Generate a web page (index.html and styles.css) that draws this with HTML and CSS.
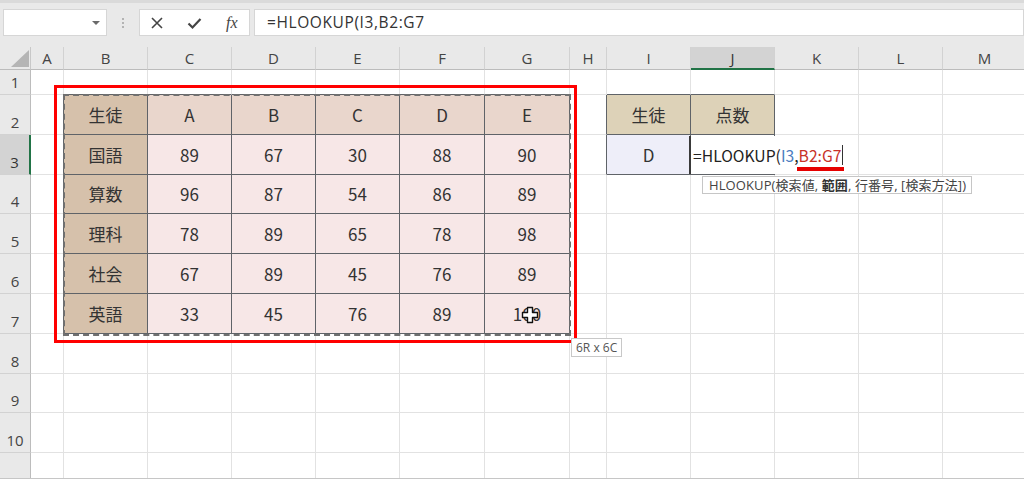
FILE: index.html
```html
<!DOCTYPE html>
<html lang="ja">
<head>
<meta charset="utf-8">
<title>HLOOKUP</title>
<link rel="stylesheet" href="styles.css">
</head>
<body>
<div class="toolbar">
  <div class="namebox"><span class="dd"></span></div>
  <div class="grip"><i></i><i></i><i></i></div>
  <div class="fxbox">
    <svg class="ic" width="14" height="14" viewBox="0 0 14 14"><path d="M2 2L12 12M12 2L2 12" stroke="#444" stroke-width="1.6" fill="none"/></svg>
    <svg class="ic ic2" width="15" height="14" viewBox="0 0 15 14"><path d="M1.5 7.5L5.5 11.5L13.5 3" stroke="#444" stroke-width="2.2" fill="none"/></svg>
    <span class="fx">fx</span>
  </div>
  <div class="formula">=HLOOKUP(I3,B2:G7</div>
</div>

<div class="sheet">
  <div class="grid">
    <div class="corner"><svg width="31" height="23" viewBox="0 0 31 23"><polygon points="29,3 11,20 29,20" fill="#b5b5b5"/></svg></div>
    <div class="ch">A</div><div class="ch">B</div><div class="ch">C</div><div class="ch">D</div><div class="ch">E</div><div class="ch">F</div><div class="ch">G</div><div class="ch">H</div><div class="ch">I</div><div class="ch sel">J</div><div class="ch">K</div><div class="ch">L</div><div class="ch">M</div>

    <div class="rh">1</div>
    <div class="c"></div><div class="c bb"></div><div class="c bb"></div><div class="c bb"></div><div class="c bb"></div><div class="c bb"></div><div class="c bb"></div><div class="c"></div><div class="c bb"></div><div class="c bb"></div><div class="c"></div><div class="c"></div><div class="c"></div>

    <div class="rh">2</div>
    <div class="c br"></div><div class="c t tan">生徒</div><div class="c t hdr">A</div><div class="c t hdr">B</div><div class="c t hdr">C</div><div class="c t hdr">D</div><div class="c t hdr">E</div><div class="c br"></div><div class="c t khaki">生徒</div><div class="c t khaki">点数</div><div class="c"></div><div class="c"></div><div class="c"></div>

    <div class="rh sel">3</div>
    <div class="c br"></div><div class="c t tan">国語</div><div class="c t pink">89</div><div class="c t pink">67</div><div class="c t pink">30</div><div class="c t pink">88</div><div class="c t pink">90</div><div class="c br"></div><div class="c t lav">D</div><div class="c t"></div><div class="c"></div><div class="c"></div><div class="c"></div>

    <div class="rh">4</div>
    <div class="c br"></div><div class="c t tan">算数</div><div class="c t pink">96</div><div class="c t pink">87</div><div class="c t pink">54</div><div class="c t pink">86</div><div class="c t pink">89</div><div class="c"></div><div class="c"></div><div class="c"></div><div class="c"></div><div class="c"></div><div class="c"></div>

    <div class="rh">5</div>
    <div class="c br"></div><div class="c t tan">理科</div><div class="c t pink">78</div><div class="c t pink">89</div><div class="c t pink">65</div><div class="c t pink">78</div><div class="c t pink">98</div><div class="c"></div><div class="c"></div><div class="c"></div><div class="c"></div><div class="c"></div><div class="c"></div>

    <div class="rh">6</div>
    <div class="c br"></div><div class="c t tan">社会</div><div class="c t pink">67</div><div class="c t pink">89</div><div class="c t pink">45</div><div class="c t pink">76</div><div class="c t pink">89</div><div class="c"></div><div class="c"></div><div class="c"></div><div class="c"></div><div class="c"></div><div class="c"></div>

    <div class="rh">7</div>
    <div class="c br"></div><div class="c t tan">英語</div><div class="c t pink">33</div><div class="c t pink">45</div><div class="c t pink">76</div><div class="c t pink">89</div><div class="c t pink">100</div><div class="c"></div><div class="c"></div><div class="c"></div><div class="c"></div><div class="c"></div><div class="c"></div>

    <div class="rh">8</div>
    <div class="c"></div><div class="c"></div><div class="c"></div><div class="c"></div><div class="c"></div><div class="c"></div><div class="c"></div><div class="c"></div><div class="c"></div><div class="c"></div><div class="c"></div><div class="c"></div><div class="c"></div>

    <div class="rh">9</div>
    <div class="c"></div><div class="c"></div><div class="c"></div><div class="c"></div><div class="c"></div><div class="c"></div><div class="c"></div><div class="c"></div><div class="c"></div><div class="c"></div><div class="c"></div><div class="c"></div><div class="c"></div>

    <div class="rh">10</div>
    <div class="c"></div><div class="c"></div><div class="c"></div><div class="c"></div><div class="c"></div><div class="c"></div><div class="c"></div><div class="c"></div><div class="c"></div><div class="c"></div><div class="c"></div><div class="c"></div><div class="c"></div>

    <div class="rh"></div>
    <div class="c"></div><div class="c"></div><div class="c"></div><div class="c"></div><div class="c"></div><div class="c"></div><div class="c"></div><div class="c"></div><div class="c"></div><div class="c"></div><div class="c"></div><div class="c"></div><div class="c"></div>
  </div>
</div>

<div class="ants"></div>
<div class="redbox"></div>
<svg class="cross" width="18" height="18" viewBox="0 0 18 18"><path d="M6.5 1.5h5v5h5v5h-5v5h-5v-5h-5v-5h5z" fill="#fff" stroke="#111" stroke-width="1.4" stroke-linejoin="round"/></svg>
<div class="sizetip">6R x 6C</div>

<div class="editor"><span>=HLOOKUP(</span><span class="ref1">I3</span><span>,</span><span class="ref2">B2:G7</span><span class="caret"></span></div>
<div class="argtip">HLOOKUP(検索値, <b>範囲</b>, 行番号, [検索方法])</div>
</body>
</html>
```

FILE: styles.css
```css
* { box-sizing: border-box; }
html, body { margin: 0; padding: 0; }
body {
  width: 1024px;
  height: 479px;
  overflow: hidden;
  background: #fff;
  position: relative;
  font-family: "Open Sans", "Noto Sans CJK JP", sans-serif;
  color: #333;
}

/* toolbar */
.toolbar {
  height: 47px;
  background: #e9e9e9;
  border-top: 3px solid #dadada;
  padding-top: 6px;
  display: flex;
  align-items: flex-start;
}
.namebox {
  margin-left: 3px;
  width: 104px;
  height: 27px;
  background: #fff;
  border: 1px solid #d6d6d6;
  display: flex;
  align-items: center;
  justify-content: flex-end;
  padding-right: 6px;
}
.dd {
  width: 0; height: 0;
  border-left: 4px solid transparent;
  border-right: 4px solid transparent;
  border-top: 4px solid #6a6a6a;
}
.grip {
  width: 32px;
  height: 27px;
  display: flex;
  flex-direction: column;
  align-items: center;
  justify-content: center;
  gap: 2px;
}
.grip i { width: 2px; height: 2px; background: #b3b3b3; display: block; }
.fxbox {
  width: 111px;
  height: 27px;
  background: #fff;
  border: 1px solid #d6d6d6;
  display: flex;
  align-items: center;
  padding-left: 10px;
}
.ic2 { margin-left: 23px; }
.fx {
  margin-left: 24px;
  font-family: "Liberation Serif", serif;
  font-style: italic;
  font-size: 16px;
  color: #444;
}
.formula {
  margin-left: 4px;
  flex: 1;
  height: 27px;
  background: #fff;
  border: 1px solid #d6d6d6;
  padding-left: 12px;
  font-size: 15.5px;
  letter-spacing: 0.6px;
  line-height: 25px;
  color: #333;
}

/* sheet */
.sheet {
  height: 432px;
  overflow: hidden;
  border-bottom: 1px solid #c6c6c6;
}
.grid {
  display: grid;
  grid-template-columns: 31px 33px 84px 84px 84px 84px 85px 85px 37px 84px 84px 84px 84px 84px;
  grid-template-rows: 23px 25px repeat(10, 39.8px);
}
.corner {
  background: #e9e9e9;
  border-right: 1px solid #c8c8c8;
  border-bottom: 1px solid #bcbcbc;
}
.corner svg { display: block; }
.ch {
  background: #e9e9e9;
  border-right: 1px solid #d2d2d2;
  border-bottom: 1px solid #bcbcbc;
  display: flex;
  align-items: center;
  justify-content: center;
  font-size: 15px;
  color: #444;
}
.ch.sel {
  background: #d3d3d3;
  border-bottom: 2px solid #217346;
  color: #333;
}
.rh {
  background: #e9e9e9;
  border-right: 1px solid #bcbcbc;
  border-bottom: 1px solid #d2d2d2;
  display: flex;
  align-items: flex-end;
  justify-content: center;
  padding-bottom: 2px;
  font-size: 15px;
  color: #444;
}
.rh.sel {
  background: #d3d3d3;
  border-right: 2px solid #217346;
  color: #333;
}
.c {
  border-right: 1px solid #e2e2e2;
  border-bottom: 1px solid #e2e2e2;
  display: flex;
  align-items: center;
  justify-content: center;
  font-family: "Noto Sans CJK JP", sans-serif;
  font-size: 17px;
  color: #333;
}
.c.bb { border-bottom-color: #5f6368; }
.c.br { border-right-color: #5f6368; }
.c.t { border-right-color: #5f6368; border-bottom-color: #5f6368; }
.tan { background: #d6c1ab; }
.hdr { background: #e9d6cc; }
.pink { background: #f7e7e7; }
.khaki { background: #ddd2b8; }
.lav { background: #eeeef9; }

/* overlays */
.ants {
  position: absolute;
  left: 63px;
  top: 94px;
  width: 508px;
  height: 242px;
  border: 2px dashed #707070;
}
.redbox {
  position: absolute;
  left: 54px;
  top: 85px;
  width: 523px;
  height: 258px;
  border: 3px solid #ff0000;
}
.cross {
  position: absolute;
  left: 521px;
  top: 306px;
}
.sizetip {
  position: absolute;
  left: 571px;
  top: 338px;
  height: 19px;
  padding: 0 4px;
  background: #fff;
  border: 1px solid #c8c8c8;
  font-size: 12px;
  line-height: 17px;
  color: #555;
}
.editor {
  position: absolute;
  left: 689px;
  top: 136px;
  width: 160px;
  height: 38px;
  padding-left: 2px;
  background: #fff;
  border-left: 2px solid #3a3a3a;
  display: flex;
  align-items: center;
  font-family: "Noto Sans CJK JP", sans-serif;
  font-size: 15.7px;
  color: #222;
  white-space: nowrap;
}
.ref1 { color: #4a7cc0; }
.ref2 { color: #c83228; position: relative; }
.ref2::after {
  content: "";
  position: absolute;
  left: -2px;
  right: -2px;
  bottom: -4px;
  height: 4px;
  background: #e60000;
}
.caret {
  display: inline-block;
  width: 1px;
  height: 20px;
  background: #333;
  margin-left: 0;
}
.argtip {
  position: absolute;
  left: 702px;
  top: 176px;
  width: 270px;
  height: 18px;
  padding-left: 6px;
  background: #fff;
  border: 1px solid #c6c6c6;
  font-family: "Open Sans", "Noto Sans CJK JP", sans-serif;
  font-size: 13px;
  letter-spacing: 0.1px;
  line-height: 16px;
  color: #444;
  white-space: nowrap;
}
.argtip b { font-weight: 700; color: #333; }
```
